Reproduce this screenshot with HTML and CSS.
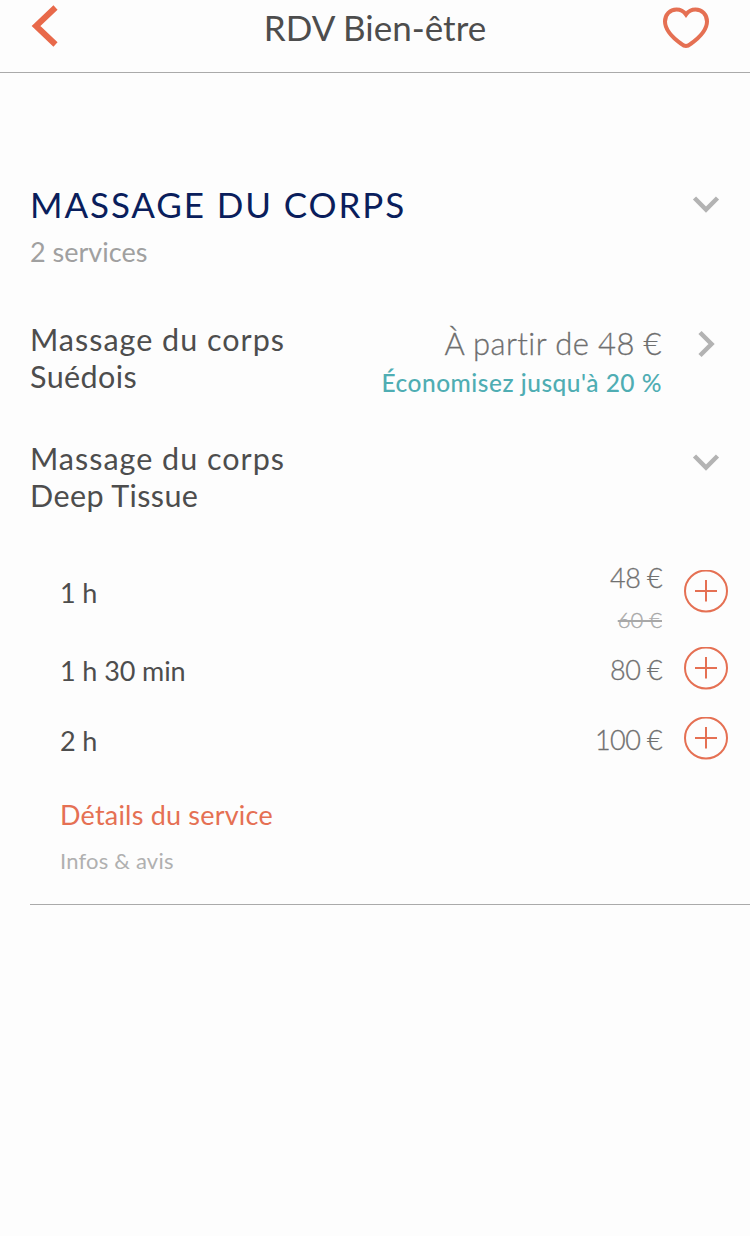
FILE: index.html
```html
<!DOCTYPE html>
<html lang="fr">
<head>
    <meta charset="utf-8">
    <meta name="viewport" content="width=device-width, initial-scale=1">
    <title>RDV Bien-être</title>
    <link rel="stylesheet" href="styles.css">
</head>
<body>
    <header class="topbar">
        <svg class="back" width="30" height="46" viewBox="0 0 30 46"><path d="M25.500 4.500 6 23l19.500 18.500"/></svg>
        <h1 class="page-title">RDV Bien-être</h1>
        <svg class="heart" width="50" height="46" viewBox="0 0 50 46"><path d="M25 10.500C22.500 7 19 5.500 15.500 5.500C9 5.500 4 10.500 4 17.500C4 27 12 34 20.500 40C23.500 42.700 26.500 42.700 29.500 40C38 34 46 27 46 17.500C46 10.500 41 5.500 34.500 5.500C31 5.500 27.500 7 25 10.500Z"/></svg>
    </header>

    <main class="services">
        <section class="row category">
            <div class="info">
                <h2 class="category-title">MASSAGE DU CORPS</h2>
                <p class="count">2 services</p>
            </div>
            <div class="action"><svg class="chevron" width="30" height="20" viewBox="0 0 30 20"><path d="M3.500 4 15 15.500 26.500 4"/></svg></div>
        </section>

        <section class="row service">
            <h3 class="service-name">Massage du corps<br>Suédois</h3>
            <div class="from">
                <p class="from-price">À partir de 48 €</p>
                <p class="saving">Économisez jusqu'à 20 %</p>
            </div>
            <div class="action"><svg class="chevron" width="20" height="30" viewBox="0 0 20 30"><path d="M4 3.500 15.500 15 4 26.500"/></svg></div>
        </section>

        <section class="row service open">
            <h3 class="service-name">Massage du corps<br>Deep Tissue</h3>
            <div class="action"><svg class="chevron" width="30" height="20" viewBox="0 0 30 20"><path d="M3.500 4 15 15.500 26.500 4"/></svg></div>
        </section>

        <ul class="options">
            <li class="option promo">
                <span class="duration">1 h</span>
                <div class="prices">
                    <span class="price">48 €</span>
                    <del class="old-price">60 €</del>
                </div>
                <div class="action"><svg class="add" width="44" height="43" viewBox="0 0 44 43"><ellipse cx="22" cy="21" rx="21" ry="20.500"/><path d="M11 21h22M22 10v21.500"/></svg></div>
            </li>
            <li class="option">
                <span class="duration">1 h 30 min</span>
                <span class="price">80 €</span>
                <div class="action"><svg class="add" width="44" height="43" viewBox="0 0 44 43"><ellipse cx="22" cy="21" rx="21" ry="20.500"/><path d="M11 21h22M22 10v21.500"/></svg></div>
            </li>
            <li class="option">
                <span class="duration">2 h</span>
                <span class="price">100 €</span>
                <div class="action"><svg class="add" width="44" height="43" viewBox="0 0 44 43"><ellipse cx="22" cy="21" rx="21" ry="20.500"/><path d="M11 21h22M22 10v21.500"/></svg></div>
            </li>
        </ul>

        <div class="details">
            <a class="details-link">Détails du service</a>
            <p class="details-note">Infos &amp; avis</p>
        </div>
    </main>
</body>
</html>
```
FILE: styles.css
```css
* {
    box-sizing: border-box;
}

body {
    margin: 0;
    min-height: 100vh;
    background-color: #fdfdfd;
    color: #4d4d4d;
    font-family: Lato, "Open Sans", sans-serif;
}

h1, h2, h3, p, ul {
    margin: 0;
    padding: 0;
    font-weight: 400;
}

svg {
    display: block;
    fill: none;
}

/* top bar */
.topbar {
    display: grid;
    grid-template-columns: 60px 1fr 60px;
    height: 73px;
    padding: 0 30px;
    border-bottom: 1px solid #aaa;
}

.back {
    margin-top: 3px;
    stroke: #e8694a;
    stroke-width: 6;
}

.heart {
    margin-top: 4px;
    justify-self: end;
    margin-right: 9px;
    stroke: #e57053;
    stroke-width: 4;
}

.page-title {
    font-size: 35px;
    line-height: 55px;
    text-align: center;
}

/* categories and services */
.services {
    margin-left: 30px;
    padding-top: 111px;
    border-bottom: 1px solid #aaa;
    height: 832px;
}

.row {
    display: flex;
}

.action {
    display: flex;
    justify-content: center;
    flex: none;
    width: 88px;
}

.info, .service-name {
    flex: 1;
}

.chevron {
    stroke: #b3b3b3;
    stroke-width: 4.5;
}

.category .chevron {
    margin-top: 10px;
}

.category-title {
    color: #0a1e5c;
    font-size: 35px;
    line-height: 40px;
    letter-spacing: 1.9px;
}

.count {
    margin-top: 12px;
    color: #a0a0a0;
    font-size: 27px;
    line-height: 32px;
}

.service {
    margin-top: 53px;
}

.service .chevron {
    margin-top: 8px;
}

.service.open {
    margin-top: 45px;
}

.service.open .chevron {
    margin-top: 12px;
}

.service-name {
    font-size: 30.5px;
    line-height: 37px;
    letter-spacing: 0.4px;
}

.service-name::first-line {
    letter-spacing: 1px;
}

.from {
    height: 74px;
    text-align: right;
}

.from-price {
    padding-top: 1px;
    color: #6e6e6e;
    font-size: 31px;
    font-weight: 300;
    line-height: 42px;
    letter-spacing: 0.4px;
    -webkit-text-stroke: 0.3px;
}

.saving {
    color: #4fadb3;
    font-size: 24.5px;
    font-weight: 500;
    line-height: 38px;
    letter-spacing: 0.5px;
}

/* durations */
.options {
    margin-top: 35px;
    padding-left: 30px;
    list-style: none;
}

.option {
    display: flex;
    align-items: center;
    height: 70px;
}

.option.promo {
    height: 84px;
}

.duration {
    flex: 1;
    padding-top: 5px;
    font-size: 27px;
    letter-spacing: -0.1px;
}

.promo .duration {
    padding-top: 3px;
}

.price {
    padding-top: 4px;
    color: #707070;
    font-size: 27px;
    font-weight: 300;
    line-height: 42px;
    letter-spacing: -0.6px;
    -webkit-text-stroke: 0.3px;
}

.prices {
    display: flex;
    flex-direction: column;
    align-items: flex-end;
    padding-top: 13px;
}

.prices .price {
    padding-top: 1px;
}

.old-price {
    color: #a8a8a8;
    font-size: 22px;
    font-weight: 300;
    line-height: 41px;
    -webkit-text-stroke: 0.3px;
}

.add {
    stroke: #e57053;
    stroke-width: 2;
}

.details {
    margin-top: 22px;
    padding-left: 30px;
}

.details-link {
    display: block;
    color: #e57053;
    font-size: 27px;
    line-height: 40px;
    letter-spacing: 0.2px;
}

.details-note {
    margin-top: 11px;
    color: #b0b0b0;
    font-size: 22px;
    line-height: 30px;
    letter-spacing: 0.2px;
}
```
